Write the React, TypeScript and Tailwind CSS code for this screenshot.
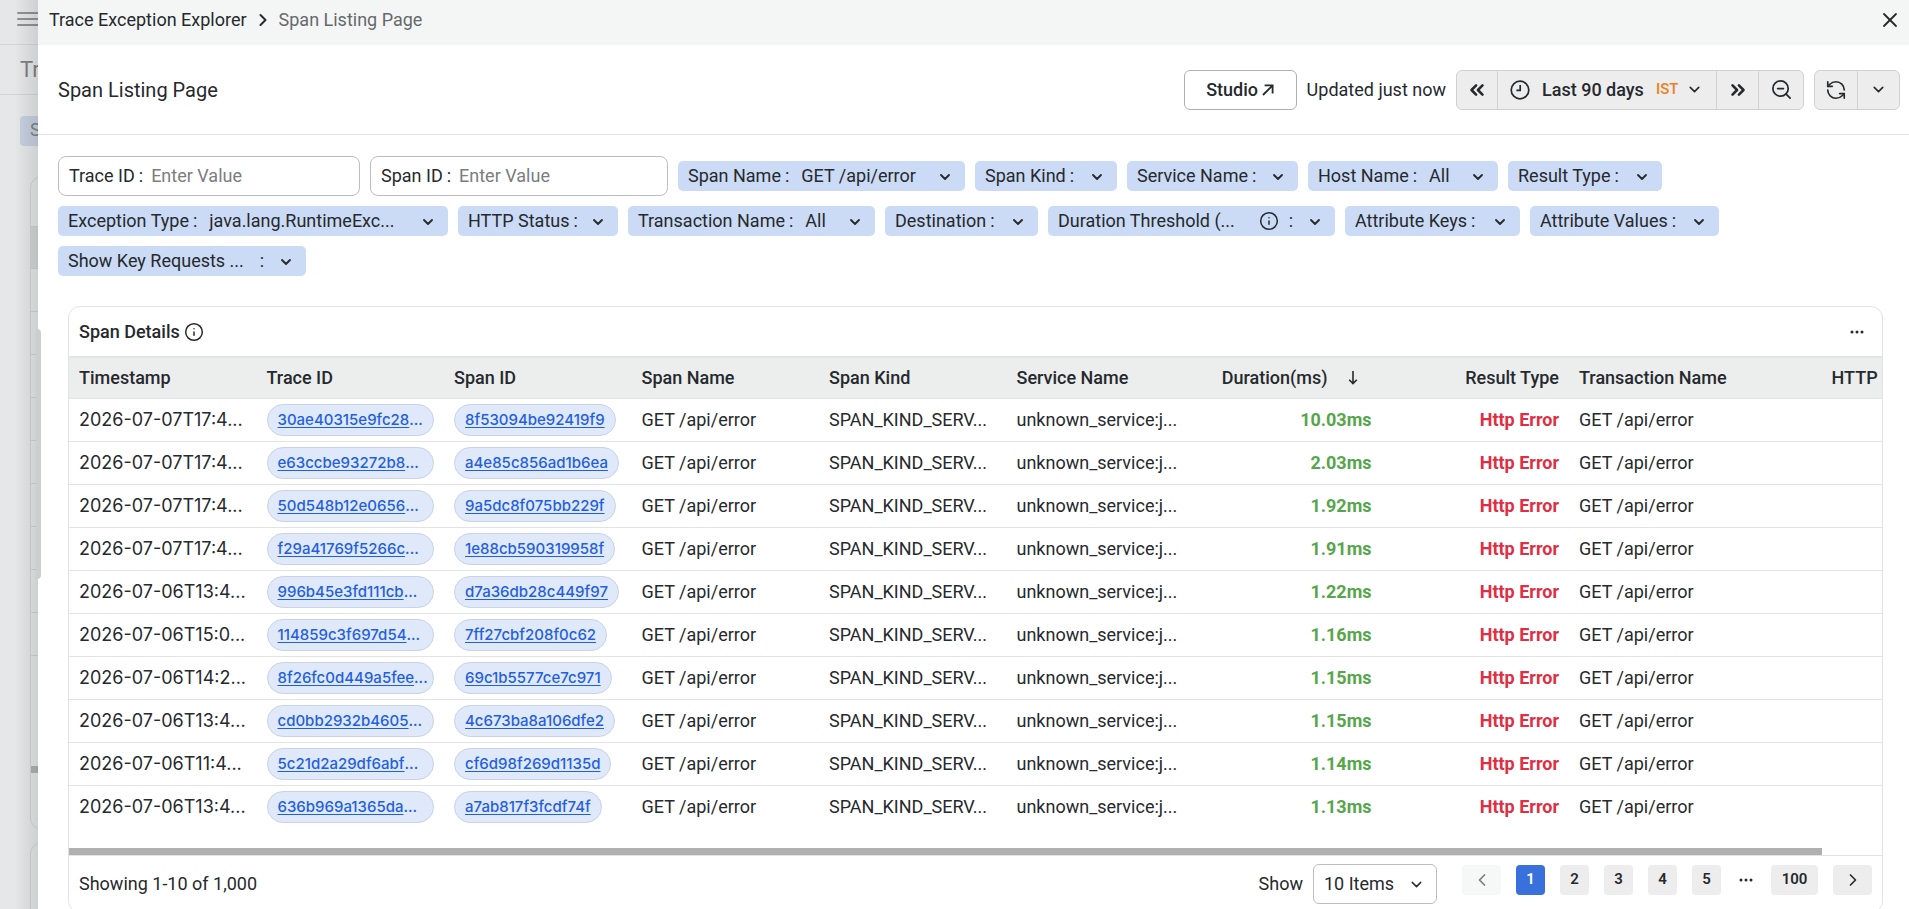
import React from "react";
import { ChevronDown, ChevronLeft, ChevronRight, ChevronsLeft, ChevronsRight, Info, RefreshCcw, X, ZoomOut } from "lucide-react";

const textFilters = [
  { label: "Trace ID", width: "w-[302px]" },
  { label: "Span ID", width: "w-[298px]" },
];

const chipFilters = [
  { label: "Span Name", value: "GET /api/error", width: "w-[287px]" },
  { label: "Span Kind", width: "w-[142px]" },
  { label: "Service Name", width: "w-[171px]" },
  { label: "Host Name", value: "All", width: "w-[190px]" },
  { label: "Result Type", width: "w-[154px]" },
  { label: "Exception Type", value: "java.lang.RuntimeExc...", width: "w-[390px]" },
  { label: "HTTP Status", width: "w-[160px]" },
  { label: "Transaction Name", value: "All", width: "w-[247px]" },
  { label: "Destination", width: "w-[153px]" },
  { label: "Duration Threshold (...", width: "w-[287px]", clipped: true, info: true },
  { label: "Attribute Keys", width: "w-[175px]" },
  { label: "Attribute Values", width: "w-[189px]" },
  { label: "Show Key Requests ...", width: "w-[248px]", clipped: true },
];

const rows = [
  { time: "2026-07-07T17:4...", trace: "30ae40315e9fc28", span: "8f53094be92419f9", duration: "10.03ms" },
  { time: "2026-07-07T17:4...", trace: "e63ccbe93272b8", span: "a4e85c856ad1b6ea", duration: "2.03ms" },
  { time: "2026-07-07T17:4...", trace: "50d548b12e0656", span: "9a5dc8f075bb229f", duration: "1.92ms" },
  { time: "2026-07-07T17:4...", trace: "f29a41769f5266c", span: "1e88cb590319958f", duration: "1.91ms" },
  { time: "2026-07-06T13:4...", trace: "996b45e3fd111cb", span: "d7a36db28c449f97", duration: "1.22ms" },
  { time: "2026-07-06T15:0...", trace: "114859c3f697d54", span: "7ff27cbf208f0c62", duration: "1.16ms" },
  { time: "2026-07-06T14:2...", trace: "8f26fc0d449a5fee", span: "69c1b5577ce7c971", duration: "1.15ms" },
  { time: "2026-07-06T13:4...", trace: "cd0bb2932b4605", span: "4c673ba8a106dfe2", duration: "1.15ms" },
  { time: "2026-07-06T11:4...", trace: "5c21d2a29df6abf", span: "cf6d98f269d1135d", duration: "1.14ms" },
  { time: "2026-07-06T13:4...", trace: "636b969a1365da", span: "a7ab817f3fcdf74f", duration: "1.13ms" },
];

const th = "px-2.5 text-left font-medium";
const td = "px-2.5";
const pageButton = "h-[30px] w-[29px] rounded bg-[#ededed]";

function ClockIcon() {
  return (
    <svg width="20" height="20" viewBox="0 0 20 20" fill="none" stroke="currentColor" strokeWidth="1.7">
      <circle cx="10" cy="10" r="8.8" />
      <path d="M10.2 5v5.4H6.4" />
    </svg>
  );
}

function OpenIcon() {
  return (
    <svg width="12" height="12" viewBox="0 0 12 12" fill="none" stroke="currentColor" strokeWidth="1.8">
      <path d="M1 11 10.4 1.6M2.6 1.4h8v8" />
    </svg>
  );
}

function SortIcon() {
  return (
    <svg width="10" height="14" viewBox="0 0 10 14" fill="none" stroke="currentColor" strokeWidth="1.6">
      <path d="M5 0v12.4M1.2 8.8 5 12.6l3.8-3.8" />
    </svg>
  );
}

function DotsIcon() {
  return (
    <svg width="14" height="4" viewBox="0 0 14 4" fill="currentColor">
      <circle cx="2" cy="2" r="1.5" />
      <circle cx="7" cy="2" r="1.5" />
      <circle cx="12" cy="2" r="1.5" />
    </svg>
  );
}

// The dimmed page that stays visible to the left of the drawer
function PageBehind() {
  return (
    <div className="relative w-[38px] shrink-0 bg-[#e5e7e8]">
      <div className="h-full overflow-hidden whitespace-nowrap">
        <div className="flex h-[45px] flex-col gap-1 border-b border-[#d3d5d6] pt-3 pl-[17px]">
          <div className="h-0.5 w-6 rounded bg-[#909293]" />
          <div className="h-0.5 w-6 rounded bg-[#909293]" />
          <div className="h-0.5 w-6 rounded bg-[#909293]" />
        </div>
        <div className="h-[50px] border-b border-[#d3d5d6] pl-5 text-[22px] leading-[50px] text-[#7f8283]">Tr</div>
        <div className="mt-[21px] ml-5 h-[30px] w-40 rounded bg-[#c6d0df] pl-2.5 leading-[28px] text-[#7f8283]">S</div>
        <div className="mt-[30px] ml-[30px] h-[654px] w-40 rounded-xl border border-[#d0d2d3]">
          <div className="h-[49px]" />
          <div className="h-[43px] border-y border-[#cbcdce] bg-[#d3d5d6]" />
          {rows.slice(1).map((_, i) => (
            <div key={i} className="h-[43px] border-b border-[#cfd1d2]" />
          ))}
          <div className="mt-[110px] h-[7px] bg-[#b0b1b2]" />
        </div>
        <div className="mt-3 ml-[30px] h-40 w-40 rounded-xl border border-[#d0d2d3]" />
      </div>
      <div className="absolute inset-y-0 right-0 w-6 bg-linear-to-r from-black/0 to-black/10" />
      <div className="absolute top-[329px] -right-[3px] h-[250px] w-[5px] rounded-r bg-[#cccecd]" />
    </div>
  );
}

function Toolbar() {
  return (
    <div className="flex h-[90px] items-center border-b border-[#e2e4e4] pr-[9px] pl-5">
      <h1 className="flex-1 text-xl">Span Listing Page</h1>
      <button className="flex h-10 w-[113px] items-center justify-center gap-1 rounded-md border border-[#aeb0b1] font-medium">
        Studio <OpenIcon />
      </button>
      <span className="mx-2.5">Updated just now</span>
      <div className="flex h-10 divide-x divide-[#d0d1d1] rounded-md border border-[#d0d1d1] bg-[#ededed]">
        <button className="flex w-[41px] items-center justify-center" aria-label="Earlier">
          <ChevronsLeft size={22} strokeWidth={2.8} />
        </button>
        <button className="flex w-[219px] items-center pl-3" aria-label="Time range">
          <ClockIcon />
          <span className="ml-3 font-medium">Last 90 days</span>
          <span className="ml-3 text-[15px] font-medium text-[#ee8020]">IST</span>
          <ChevronDown size={17} strokeWidth={2.2} className="ml-2" />
        </button>
        <button className="flex w-[42px] items-center justify-center" aria-label="Later">
          <ChevronsRight size={22} strokeWidth={2.8} />
        </button>
        <button className="flex w-11 items-center justify-center" aria-label="Zoom out">
          <ZoomOut size={23} strokeWidth={1.8} />
        </button>
      </div>
      <div className="ml-2.5 flex h-10 w-[86px] divide-x divide-[#d0d1d1] rounded-md border border-[#d0d1d1] bg-[#ededed]">
        <button className="flex flex-1 items-center justify-center" aria-label="Refresh">
          <RefreshCcw size={22} strokeWidth={1.8} />
        </button>
        <button className="flex flex-1 items-center justify-center" aria-label="Refresh interval">
          <ChevronDown size={17} strokeWidth={2.2} />
        </button>
      </div>
    </div>
  );
}

function Filters() {
  return (
    <div className="flex flex-wrap items-center gap-2.5 px-5 pt-[21px] pb-[30px]">
      {textFilters.map((f) => (
        <label key={f.label} className={`flex h-10 items-center rounded-lg border border-[#bcbdbe] px-2.5 ${f.width}`}>
          <span>{f.label}</span>
          <span className="mx-1">:</span>
          <input className="ml-1 min-w-0 flex-1 outline-none placeholder:text-[#7b7d7f]" placeholder="Enter Value" />
        </label>
      ))}
      {chipFilters.map((f) => (
        <label key={f.label} className={`relative flex h-[30px] items-center rounded-[5px] bg-[#cbdbf5] pl-2.5 leading-7 ${f.width}`}>
          <span>{f.label}</span>
          {f.info && <Info size={20} strokeWidth={1.8} className="ml-6" />}
          <span className={f.info ? "ml-2.5" : f.clipped ? "ml-4" : "ml-1"}>:</span>
          <select className="ml-3 h-7 min-w-0 flex-1 appearance-none bg-transparent outline-none">
            <option>{f.value ?? ""}</option>
          </select>
          <ChevronDown size={16} strokeWidth={2.8} className="pointer-events-none absolute top-2 right-3" />
        </label>
      ))}
    </div>
  );
}

function SpanTable() {
  return (
    <div className="overflow-hidden">
      <table className="w-[1875px] table-fixed border-collapse whitespace-nowrap">
        <thead>
          <tr className="h-[41px] border-t-2 border-b border-[#e2e4e4] bg-[#eceeed]">
            <th className={th}>Timestamp</th>
            <th className={th}>Trace ID</th>
            <th className={th}>Span ID</th>
            <th className={th}>Span Name</th>
            <th className={th}>Span Kind</th>
            <th className={th}>Service Name</th>
            <th className={th}>
              <span className="flex items-center justify-end gap-5 pr-3.5">
                Duration(ms) <SortIcon />
              </span>
            </th>
            <th className="px-2.5 text-right font-medium">Result Type</th>
            <th className={th}>Transaction Name</th>
            <th className="px-2.5 text-right font-medium">HTTP Status</th>
          </tr>
        </thead>
        <tbody>
          {rows.map((r) => (
            <tr key={r.span} className="h-[43px] border-b border-[#e2e4e4] last:border-b-0">
              <td className="px-2.5 font-['Inter',sans-serif]">{r.time}</td>
              <td className={td}>
                <div className="flex h-8 items-center rounded-full border border-[#c8d3e6] bg-[#e0e9fa] px-2.5 font-['Inter',sans-serif] text-[15px] font-medium text-[#1f60e0]">
                  <a href="#" className="underline underline-offset-2">{r.trace}</a>...
                </div>
              </td>
              <td className={td}>
                <a href="#" className="inline-flex h-8 items-center rounded-full border border-[#c8d3e6] bg-[#e0e9fa] px-2.5 align-middle font-['Inter',sans-serif] text-[15px] font-medium text-[#1f60e0] underline underline-offset-2">
                  {r.span}
                </a>
              </td>
              <td className={td}>GET /api/error</td>
              <td className={td}>SPAN_KIND_SERV...</td>
              <td className={td}>unknown_service:j...</td>
              <td className="px-2.5 text-right font-bold text-[#56a64b]">{r.duration}</td>
              <td className="px-2.5 text-right font-bold text-[#e02f44]">Http Error</td>
              <td className={td}>GET /api/error</td>
              <td className={td}></td>
            </tr>
          ))}
        </tbody>
      </table>
      {/* horizontal scroll thumb */}
      <div className="mt-5 mr-[60px] h-[7px] bg-[#b0b0b0]" />
    </div>
  );
}

function Footer() {
  return (
    <div className="flex items-start border-t border-[#e2e4e4] px-2.5 pt-2 pb-2">
      <span className="flex-1 leading-10">Showing 1-10 of 1,000</span>
      <label htmlFor="page-size" className="mr-2.5 leading-10">Show</label>
      <div className="relative mr-[25px]">
        <select id="page-size" className="h-10 w-[124px] appearance-none rounded-md border border-[#bcbdbe] bg-white px-2.5">
          <option>10 Items</option>
        </select>
        <ChevronDown size={17} className="pointer-events-none absolute top-3 right-3" />
      </div>
      <nav className="flex gap-[15px] pt-px text-[15px] font-semibold">
        <button className="flex h-[30px] w-[39px] items-center justify-center rounded bg-[#f6f7f7] text-[#77797b]" aria-label="Previous page">
          <ChevronLeft size={20} />
        </button>
        <button className="h-[30px] w-[29px] rounded bg-[#3871dc] text-white">1</button>
        <button className={pageButton}>2</button>
        <button className={pageButton}>3</button>
        <button className={pageButton}>4</button>
        <button className={pageButton}>5</button>
        <span className="flex h-[30px] w-5 items-center justify-center"><DotsIcon /></span>
        <button className="h-[30px] w-[47px] rounded bg-[#ededed]">100</button>
        <button className="flex h-[30px] w-[39px] items-center justify-center rounded bg-[#ededed]" aria-label="Next page">
          <ChevronRight size={20} />
        </button>
      </nav>
    </div>
  );
}

export default function App() {
  return (
    <div className="flex h-screen overflow-hidden bg-white font-['Roboto',sans-serif] text-lg text-[#26292d]">
      <PageBehind />
      <main className="min-w-0 flex-1">
        <header className="flex h-[45px] items-center bg-[#f4f6f5] pr-[7px] pb-1.5 pl-[11px]">
          <a href="#">Trace Exception Explorer</a>
          <ChevronRight size={20} strokeWidth={2.4} className="mx-1.5" />
          <span className="flex-1 text-[#66696c]">Span Listing Page</span>
          <button aria-label="Close">
            <X size={24} strokeWidth={1.8} />
          </button>
        </header>
        <Toolbar />
        <Filters />
        <section className="mr-[26px] ml-[30px] overflow-hidden rounded-xl border border-[#e2e4e4]">
          <div className="flex h-[49px] items-center px-2.5">
            <h2 className="font-medium">Span Details</h2>
            <Info size={20} strokeWidth={1.8} className="ml-1" />
            <button className="mr-2 ml-auto" aria-label="More options">
              <DotsIcon />
            </button>
          </div>
          <SpanTable />
          <Footer />
        </section>
      </main>
    </div>
  );
}
